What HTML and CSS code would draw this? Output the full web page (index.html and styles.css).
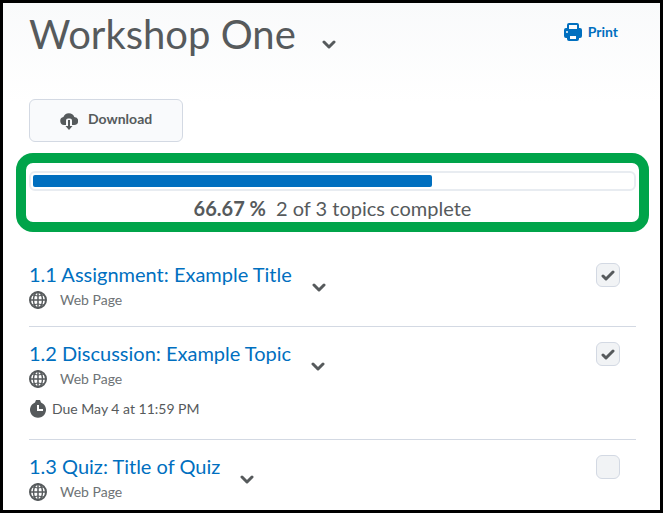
FILE: index.html
```html
<!DOCTYPE html>
<html lang="en">
<head>
    <meta charset="UTF-8">
    <meta name="viewport" content="width=device-width, initial-scale=1.0">
    <title>Workshop One</title>
    <link rel="stylesheet" href="styles.css">
</head>
<body>
    <!-- Shared icons -->
    <svg class="sprite" aria-hidden="true">
        <symbol id="chevron" viewBox="0 0 14 9">
            <path d="M2 2l5 5 5-5" fill="none" stroke="currentColor" stroke-width="3" stroke-linecap="round" stroke-linejoin="round"/>
        </symbol>
        <symbol id="globe" viewBox="0 0 18 18">
            <g fill="none" stroke="currentColor">
                <circle cx="9" cy="9" r="8" stroke-width="2"/>
                <ellipse cx="9" cy="9" rx="4.5" ry="8" stroke-width="1.4"/>
                <path d="M9 1v16M1 9h16" stroke-width="1.5"/>
                <path d="M3 4q6 2 12 0M3 14q6-2 12 0" stroke-width="1"/>
            </g>
        </symbol>
    </svg>

    <main class="page">
        <header class="header">
            <h1>Workshop One</h1>
            <button type="button" class="menu-button" aria-label="Actions for Workshop One">
                <svg class="chevron"><use href="#chevron"/></svg>
            </button>
            <a href="#" class="print">
                <svg width="18" height="18" viewBox="0 0 18 18" aria-hidden="true">
                    <path fill="currentColor" fill-rule="evenodd" d="M5 0h8a2 2 0 0 1 2 2v3h1a2 2 0 0 1 2 2v6a2 2 0 0 1-2 2h-1v1a2 2 0 0 1-2 2H5a2 2 0 0 1-2-2v-1H2a2 2 0 0 1-2-2V7a2 2 0 0 1 2-2h1V2a2 2 0 0 1 2-2zM5 2v4h8V2zM6 13v3h6v-3zM3 8a1 1 0 1 0 0 2 1 1 0 0 0 0-2z"/>
                </svg>
                Print
            </a>
        </header>

        <button type="button" class="download">
            <svg width="18" height="18" viewBox="0 0 18 18" aria-hidden="true">
                <path fill="currentColor" d="M4 13a4 4 0 0 1-.6-7.9A5.8 5.8 0 0 1 14.3 5 4 4 0 0 1 14 13h-2V8.500a2 2 0 0 0-2-2H8a2 2 0 0 0-2 2V13z"/>
                <path fill="currentColor" d="M8 8h2v6h2.500L9 18l-3.500-4H8z"/>
            </svg>
            Download
        </button>

        <section class="progress">
            <div class="progress-track" role="progressbar" aria-label="Topics complete" aria-valuenow="66.67" aria-valuemin="0" aria-valuemax="100">
                <div class="progress-fill" style="width: 66.67%"></div>
            </div>
            <p class="progress-text"><strong>66.67 %</strong> <span>2 of 3 topics complete</span></p>
        </section>

        <ul class="topics">
            <li class="topic">
                <div class="topic-info">
                    <a href="#" class="topic-title">1.1 Assignment: Example Title</a>
                    <div class="topic-type"><svg class="globe" aria-hidden="true"><use href="#globe"/></svg>Web Page</div>
                </div>
                <button type="button" class="menu-button" aria-label="Actions for Assignment: Example Title">
                    <svg class="chevron"><use href="#chevron"/></svg>
                </button>
                <label class="check">
                    <input type="checkbox" aria-label="Assignment: Example Title complete" checked>
                    <svg viewBox="0 0 14 11" aria-hidden="true"><path d="M2 6l3 3 7-7"/></svg>
                </label>
            </li>
            <li class="topic">
                <div class="topic-info">
                    <a href="#" class="topic-title">1.2 Discussion: Example Topic</a>
                    <div class="topic-type"><svg class="globe" aria-hidden="true"><use href="#globe"/></svg>Web Page</div>
                    <div class="topic-due">
                        <svg width="18" height="18" viewBox="0 0 18 18" aria-hidden="true">
                            <path fill="currentColor" fill-rule="evenodd" d="M7 0h4l1 2.400A8 8 0 1 1 6 2.400zM8 5v6h6V9h-4V5z"/>
                        </svg>
                        Due May 4 at 11:59 PM
                    </div>
                </div>
                <button type="button" class="menu-button" aria-label="Actions for Discussion: Example Topic">
                    <svg class="chevron"><use href="#chevron"/></svg>
                </button>
                <label class="check">
                    <input type="checkbox" aria-label="Discussion: Example Topic complete" checked>
                    <svg viewBox="0 0 14 11" aria-hidden="true"><path d="M2 6l3 3 7-7"/></svg>
                </label>
            </li>
            <li class="topic">
                <div class="topic-info">
                    <a href="#" class="topic-title">1.3 Quiz: Title of Quiz</a>
                    <div class="topic-type"><svg class="globe" aria-hidden="true"><use href="#globe"/></svg>Web Page</div>
                </div>
                <button type="button" class="menu-button" aria-label="Actions for Quiz: Title of Quiz">
                    <svg class="chevron"><use href="#chevron"/></svg>
                </button>
                <label class="check">
                    <input type="checkbox" aria-label="Quiz: Title of Quiz complete">
                    <svg viewBox="0 0 14 11" aria-hidden="true"><path d="M2 6l3 3 7-7"/></svg>
                </label>
            </li>
        </ul>
    </main>
</body>
</html>
```

FILE: styles.css
```css
:root {
    --text: #565a5c;
    --muted: #6e7376;
    --link: #006fbf;
    --line: #d3d9e3;
    --highlight: #00a44a;
}
* {
    box-sizing: border-box;
}
body {
    font-family: Lato, sans-serif;
    font-size: 14px;
    line-height: 20px;
    margin: 0;
    color: var(--text);
}
.sprite {
    display: none;
}
.page {
    min-height: 100vh;
    padding: 0 24px 0 26px;
    border: 3px solid #000;
    background: linear-gradient(#f9fafb, #fff 100px);
}
.header {
    display: flex;
    align-items: flex-start;
    padding-top: 7px;
    margin-bottom: 41px;
}
h1 {
    margin: 0;
    font-size: 40px;
    font-weight: 400;
    line-height: 48px;
}
.menu-button {
    display: flex;
    padding: 8px;
    border: none;
    background: none;
    color: var(--text);
    cursor: pointer;
}
.chevron {
    width: 14px;
    height: 9px;
}
.header .menu-button {
    margin: 22px 0 0 18px;
}
a {
    color: var(--link);
    text-decoration: none;
}
.print {
    display: flex;
    align-items: center;
    gap: 6px;
    margin: 12px 18px 0 auto;
    font-weight: 700;
}
.download {
    display: flex;
    align-items: center;
    gap: 10px;
    height: 43px;
    padding: 0 30px 3px;
    border: 1px solid var(--line);
    border-radius: 6px;
    background: #f9fafc;
    color: var(--text);
    font: inherit;
    font-weight: 700;
    cursor: pointer;
}
.download svg {
    margin-top: 4px;
}
.progress {
    margin: 11px -13px 0;
    padding: 8px 3px 0;
    border: 10px solid var(--highlight);
    border-radius: 17px;
    background: #fff;
}
.progress-track {
    height: 20px;
    padding: 2px;
    border: 2px solid #e8ecf1;
    border-radius: 6px;
}
.progress-fill {
    height: 12px;
    border-radius: 2px;
    background: var(--link);
}
.progress-text {
    display: flex;
    justify-content: center;
    gap: 10px;
    margin: 5px 0 2px;
    font-size: 20px;
    line-height: 24px;
}
.topics {
    margin: 16px 0 0;
    padding: 0;
    list-style: none;
}
.topic {
    display: flex;
    align-items: flex-start;
    padding: 15px 16px 14px 0;
    border-bottom: 1px solid var(--line);
}
.topic:last-child {
    padding-bottom: 0;
    border-bottom: none;
}
.topic-title {
    display: block;
    font-size: 20px;
    line-height: 22px;
}
.topic-type,
.topic-due {
    display: flex;
    align-items: center;
    line-height: 24px;
}
.topic-type {
    gap: 13px;
    margin-top: 3px;
    color: var(--muted);
}
.topic-due {
    gap: 5px;
    margin: 6px 0 4px;
}
.globe {
    width: 18px;
    height: 18px;
    color: var(--text);
}
.topic .menu-button {
    margin: 12px 0 0 12px;
}
.check {
    display: grid;
    place-items: center;
    margin-left: auto;
}
.check input,
.check svg {
    grid-area: 1 / 1;
}
.check input {
    appearance: none;
    width: 24px;
    height: 24px;
    margin: 0;
    border: 1px solid var(--line);
    border-radius: 6px;
    background: #f1f3f5;
}
.check svg {
    width: 14px;
    height: 11px;
    fill: none;
    stroke: var(--text);
    stroke-width: 3;
    stroke-linecap: round;
    stroke-linejoin: round;
    visibility: hidden;
    pointer-events: none;
}
.check input:checked + svg {
    visibility: visible;
}
```
